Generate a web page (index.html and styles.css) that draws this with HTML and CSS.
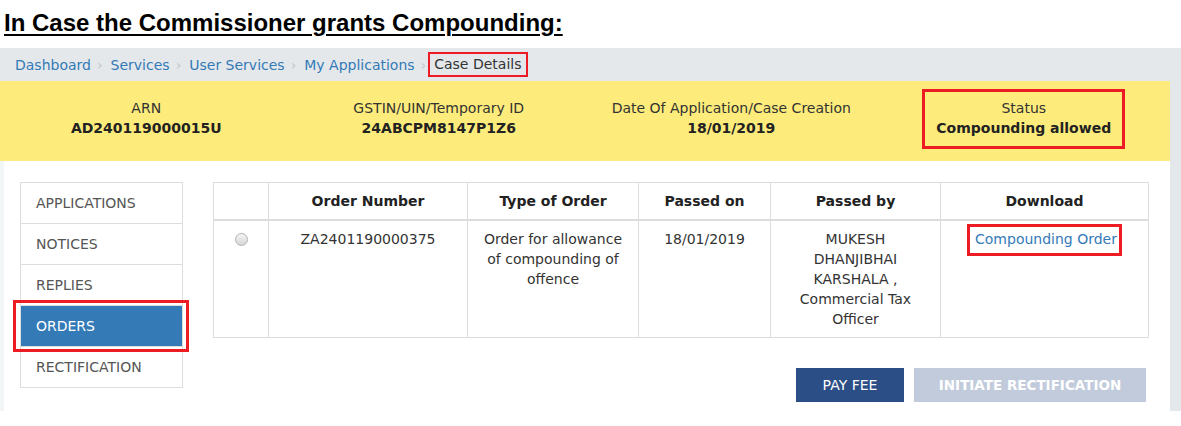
FILE: index.html
```html
<!DOCTYPE html>
<html lang="en">
<head>
    <meta charset="UTF-8">
    <meta name="viewport" content="width=device-width, initial-scale=1.0">
    <title>Case Details</title>
    <link rel="stylesheet" href="styles.css">
</head>
<body>

    <h1 class="title">In Case the Commissioner grants Compounding:</h1>

    <div class="page">
        <ul class="breadcrumb">
            <li><a href="#">Dashboard</a></li>
            <li><a href="#">Services</a></li>
            <li><a href="#">User Services</a></li>
            <li><a href="#">My Applications</a></li>
            <li class="active"><span class="mark mark-thin">Case Details</span></li>
        </ul>

        <div class="case-info">
            <div class="info">
                <div class="info-label">ARN</div>
                <div class="info-value">AD240119000015U</div>
            </div>
            <div class="info">
                <div class="info-label">GSTIN/UIN/Temporary ID</div>
                <div class="info-value">24ABCPM8147P1Z6</div>
            </div>
            <div class="info">
                <div class="info-label">Date Of Application/Case Creation</div>
                <div class="info-value">18/01/2019</div>
            </div>
            <div class="info">
                <div class="info-status mark">
                    <div class="info-label">Status</div>
                    <div class="info-value">Compounding allowed</div>
                </div>
            </div>
        </div>

        <div class="panel">
            <ul class="side-nav">
                <li><a href="#">APPLICATIONS</a></li>
                <li><a href="#">NOTICES</a></li>
                <li><a href="#">REPLIES</a></li>
                <li class="active"><a href="#">ORDERS</a></li>
                <li><a href="#">RECTIFICATION</a></li>
            </ul>

            <div class="main">
                <table class="orders">
                    <colgroup>
                        <col style="width: 55px">
                        <col style="width: 199px">
                        <col style="width: 171px">
                        <col style="width: 132px">
                        <col style="width: 170px">
                        <col style="width: 208px">
                    </colgroup>
                    <thead>
                        <tr>
                            <th></th>
                            <th>Order Number</th>
                            <th>Type of Order</th>
                            <th>Passed on</th>
                            <th>Passed by</th>
                            <th>Download</th>
                        </tr>
                    </thead>
                    <tbody>
                        <tr>
                            <td><span class="radio"></span></td>
                            <td>ZA2401190000375</td>
                            <td>Order for allowance of compounding of offence</td>
                            <td>18/01/2019</td>
                            <td>MUKESH DHANJIBHAI KARSHALA , Commercial Tax Officer</td>
                            <td><a href="#" class="mark download">Compounding Order</a></td>
                        </tr>
                    </tbody>
                </table>

                <div class="actions">
                    <button class="btn btn-primary">PAY FEE</button>
                    <button class="btn btn-disabled" disabled>INITIATE RECTIFICATION</button>
                </div>
            </div>
        </div>
    </div>

</body>
</html>
```

FILE: styles.css
```css
body {
    margin: 0;
    font-family: 'DejaVu Sans', Verdana, sans-serif;
    font-size: 14px;
    color: #333;
    background-color: #fff;
}

a {
    color: #337ab7;
    text-decoration: none;
}

.title {
    margin: 0;
    padding: 9px 0 0 4px;
    height: 48px;
    box-sizing: border-box;
    font-family: 'Liberation Sans', Arial, sans-serif;
    font-size: 24px;
    line-height: 28px;
    font-weight: bold;
    text-decoration: underline;
    text-decoration-thickness: 2px;
    text-underline-offset: 3px;
    color: #000;
}

.page {
    background-color: #e4e8eb;
    padding-right: 11px;
}

.mark {
    border: 3px solid #ed1c24;
}

.mark-thin {
    border-width: 2px;
}

/* breadcrumb */

.breadcrumb {
    list-style: none;
    margin: 0;
    padding: 0 0 0 15px;
    height: 33px;
    display: flex;
    align-items: center;
}

.breadcrumb li {
    display: flex;
    align-items: center;
    line-height: 20px;
}

.breadcrumb li + li::before {
    content: '\203A';
    color: #c3c7cb;
    font-size: 14px;
    padding: 0 8px 0 6px;
}

.breadcrumb li.active .mark {
    color: #333;
    padding: 0 5px 1px 4px;
    margin-left: -6px;
}

/* case info */

.case-info {
    display: grid;
    grid-template-columns: repeat(4, 1fr);
    height: 80px;
    background-color: #fdec7b;
    text-align: center;
}

.info {
    padding-top: 17px;
    line-height: 20px;
}

.info-label {
    color: #333;
}

.info-value {
    font-weight: bold;
    color: #222;
}

.info-status {
    width: 197px;
    margin: -9px auto 0;
    padding: 6px 0 8px;
}

/* panel */

.panel {
    display: flex;
    align-items: flex-start;
    gap: 30px;
    background-color: #fff;
    border-left: 4px solid #f3f6f7;
    padding: 21px 21px 9px 16px;
}

.side-nav {
    list-style: none;
    margin: 0;
    padding: 0;
    width: 163px;
    border: 1px solid #dddddd;
    position: relative;
}

.side-nav li + li {
    border-top: 1px solid #dddddd;
}

.side-nav a {
    display: block;
    height: 40px;
    line-height: 40px;
    padding-left: 15px;
    color: #555;
}

.side-nav li.active a {
    background-color: #337ab7;
    color: #fff;
}

.side-nav li.active::after {
    content: '';
    position: absolute;
    left: -8px;
    right: -7px;
    top: 117px;
    height: 46px;
    border: 3px solid #ed1c24;
}

.main {
    flex: 1;
}

/* orders table */

.orders {
    width: 935px;
    border-collapse: collapse;
    table-layout: fixed;
}

.orders th,
.orders td {
    border: 1px solid #dddddd;
    padding: 8px 12px;
    line-height: 20px;
    text-align: center;
    vertical-align: top;
}

.orders th {
    border-bottom-width: 2px;
    font-weight: bold;
    color: #222;
}

.orders td {
    color: #333;
}

.radio {
    display: inline-block;
    width: 11px;
    height: 11px;
    margin-top: 4px;
    border: 1px solid #b4b4b4;
    border-radius: 50%;
    background: linear-gradient(#f4f4f4, #d6d6d6);
}

.download {
    display: inline-block;
    padding: 2px 2px 4px 5px;
    margin: -6px -8px 0 -8px;
}

/* buttons */

.actions {
    display: flex;
    justify-content: flex-end;
    gap: 10px;
    margin-top: 30px;
    padding-right: 3px;
}

.btn {
    height: 34px;
    border: none;
    color: #fff;
    font-family: 'DejaVu Sans', Verdana, sans-serif;
    font-size: 14px;
    cursor: pointer;
}

.btn-primary {
    width: 108px;
    background-color: #2c4e86;
}

.btn-disabled {
    width: 232px;
    background-color: #c1cbdb;
    font-weight: bold;
    font-size: 13.5px;
    cursor: default;
}
```
